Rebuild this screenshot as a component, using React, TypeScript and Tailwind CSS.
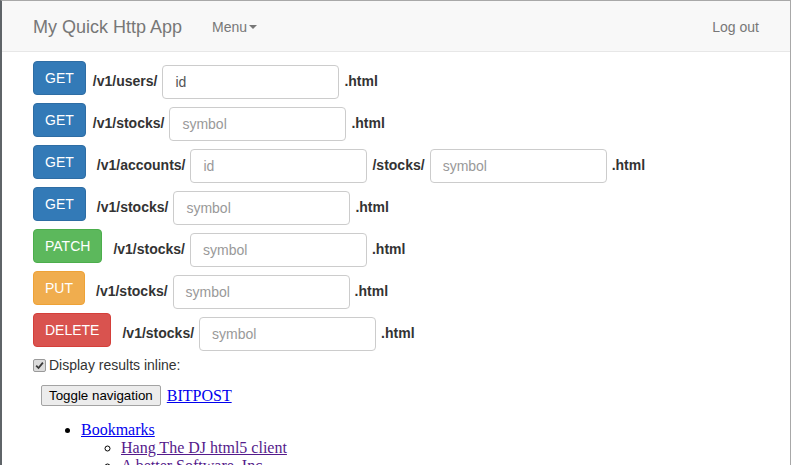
import React from "react";

interface endpointPart {
    label: string,
    placeholder: string,
    filled?: boolean,
}

interface endpointRow {
    method: string,
    btnClass: string,
    labelGap: string,
    parts: endpointPart[],
}

const rows: endpointRow[] = [
    {method: 'GET', btnClass: 'bg-[#337ab7] border-[#2e6da4]', labelGap: 'ml-[7px]', parts: [{label: '/v1/users/', placeholder: 'id', filled: true}]},
    {method: 'GET', btnClass: 'bg-[#337ab7] border-[#2e6da4]', labelGap: 'ml-[7px]', parts: [{label: '/v1/stocks/', placeholder: 'symbol'}]},
    {method: 'GET', btnClass: 'bg-[#337ab7] border-[#2e6da4]', labelGap: 'ml-[11px]', parts: [{label: '/v1/accounts/', placeholder: 'id'}, {label: '/stocks/', placeholder: 'symbol'}]},
    {method: 'GET', btnClass: 'bg-[#337ab7] border-[#2e6da4]', labelGap: 'ml-[11px]', parts: [{label: '/v1/stocks/', placeholder: 'symbol'}]},
    {method: 'PATCH', btnClass: 'bg-[#5cb85c] border-[#4cae4c]', labelGap: 'ml-[11px]', parts: [{label: '/v1/stocks/', placeholder: 'symbol'}]},
    {method: 'PUT', btnClass: 'bg-[#f0ad4e] border-[#eea236]', labelGap: 'ml-[11px]', parts: [{label: '/v1/stocks/', placeholder: 'symbol'}]},
    {method: 'DELETE', btnClass: 'bg-[#d9534f] border-[#d43f3a]', labelGap: 'ml-[11px]', parts: [{label: '/v1/stocks/', placeholder: 'symbol'}]},
]

function NavBar() {
    return (
        <nav className="h-[51px] shrink-0 flex items-center bg-[#f8f8f8] border-b border-[#e7e7e7] pl-[31px] pr-[31px] text-[#777]">
            <span className="text-[18px] leading-[20px] mt-[1px]">My Quick Http App</span>
            <span className="ml-[30px] text-[14px] leading-[20px] flex items-center mt-[1px]">
                Menu
                <span className="ml-[2px] mt-[1px] w-0 h-0 border-l-[4px] border-r-[4px] border-t-[4px] border-l-transparent border-r-transparent border-t-[#777]" />
            </span>
            <span className="ml-auto text-[14px] leading-[20px] mt-[1px]">Log out</span>
        </nav>
    )
}

function Row(props: {row: endpointRow}) {
    const { row } = props
    return (
        <div className="flex items-start h-[34px] mb-[8px]">
            <button className={"h-[34px] px-[11px] border rounded-[4px] text-white text-[14px] leading-[20px] " + row.btnClass}>
                {row.method}
            </button>
            <div className={"flex items-start " + row.labelGap}>
                {row.parts.map((part, i) => (
                    <div className={"flex items-start " + (i > 0 ? "ml-[5px]" : "")} key={i}>
                        <span className="mt-[10px] font-bold text-[14px] leading-[20px] text-[#333]">{part.label}</span>
                        <div className={"ml-[5px] w-[177px] h-[34px] border border-[#ccc] rounded-[4px] bg-white px-[12px] flex items-center text-[14px] mt-[4px] " + (part.filled ? "text-[#555]" : "text-[#999]")}>
                            <span>{part.placeholder}</span>
                        </div>
                    </div>
                ))}
                <span className="ml-[5px] mt-[10px] font-bold text-[14px] leading-[20px] text-[#333]">.html</span>
            </div>
        </div>
    )
}

export default function App() {
    return (
        <div className="w-[794px] h-[465px] overflow-hidden bg-white" style={{fontFamily: '"Liberation Sans", Arial, sans-serif'}}>
            <div className="w-[791px] h-[465px] flex flex-col border-l-2 border-t border-r border-l-[#5f6468] border-t-[#a8a8a8] border-r-[#a8a8a8]">
                <NavBar />
                <div className="pl-[31px] pt-[9px]">
                    {rows.map((row, i) => <Row row={row} key={i} />)}
                    <div className="flex items-center h-[20px] text-[14px] text-[#333]">
                        <span className="w-[13px] h-[13px] rounded-[2px] border border-[#9a9a9a] bg-[#dcdcdc] flex items-center justify-center">
                            <svg width="9" height="9" viewBox="0 0 9 9">
                                <path d="M1.2 4.6 L3.5 7 L7.9 1.6" stroke="#3a3a3a" strokeWidth="1.8" fill="none" />
                            </svg>
                        </span>
                        <span className="ml-[3px]">Display results inline:</span>
                    </div>
                </div>
                <div className="pl-[39px] pt-[10px]" style={{fontFamily: '"Liberation Serif", "Times New Roman", serif'}}>
                    <div className="flex items-center h-[21px]">
                        <button className="h-[21px] px-[7px] bg-[#ececec] border border-[#a3a3a3] rounded-[2px] text-[13.33px] text-black leading-[16px]" style={{fontFamily: '"Liberation Sans", Arial, sans-serif'}}>
                            Toggle navigation
                        </button>
                        <a className="ml-[6px] text-[16px] text-[#0000ee] underline">BITPOST</a>
                    </div>
                    <ul className="list-disc pl-[40px] mt-[15px] text-[16px] leading-[18px]">
                        <li><a className="text-[#0000ee] underline">Bookmarks</a>
                            <ul className="list-[circle] pl-[40px]">
                                <li><a className="text-[#551a8b] underline">Hang The DJ html5 client</a></li>
                                <li><a className="text-[#551a8b] underline">A better Software, Inc.</a></li>
                            </ul>
                        </li>
                    </ul>
                </div>
            </div>
        </div>
    )
}
